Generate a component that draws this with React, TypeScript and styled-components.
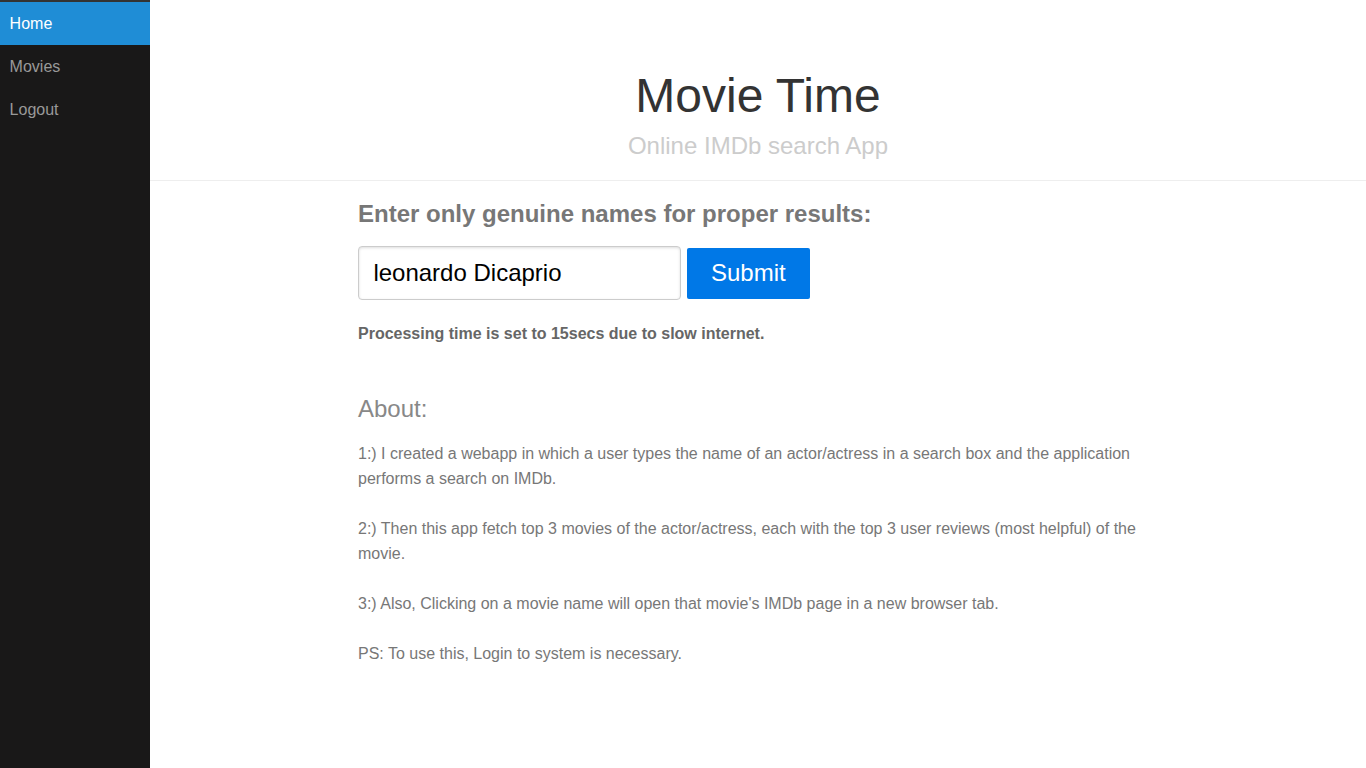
import React from "react";
import styled, { createGlobalStyle } from "styled-components";

const Global = createGlobalStyle`
  html, body { margin: 0; padding: 0; }
  body { font-family: "Liberation Sans", Arial, sans-serif; background: #fff; color: #777; }
  * { box-sizing: border-box; }
`;

const Layout = styled.div`
  display: flex;
  min-height: 100vh;
`;

const Sidebar = styled.nav`
  width: 150px;
  flex: 0 0 150px;
  background: #191818;
  border-top: 2px solid #333;
`;

const MenuList = styled.ul`
  list-style: none;
  margin: 0;
  padding: 0;
`;

const MenuLink = styled.a<{ $active?: boolean }>`
  display: block;
  padding: 9.6px 0 9.6px 9.6px;
  font-size: 16px;
  line-height: 24px;
  color: ${(p) => (p.$active ? "#fff" : "#999")};
  background: ${(p) => (p.$active ? "#1f8dd6" : "transparent")};
  text-decoration: none;
`;

const Main = styled.main`
  flex: 1;
  min-width: 0;
`;

const Header = styled.header`
  text-align: center;
  padding: 68px 32px 20px;
  border-bottom: 1px solid #eee;
`;

const Title = styled.h1`
  margin: 0;
  font-size: 48px;
  line-height: 56px;
  font-weight: 300;
  color: #333;
`;

const Subtitle = styled.h2`
  margin: 8px 0 0;
  font-size: 24px;
  line-height: 28px;
  font-weight: 300;
  color: #ccc;
`;

const Content = styled.section`
  max-width: 864px;
  margin: 0 auto;
  padding: 0 32px 50px;
`;

const Prompt = styled.h3`
  margin: 19px 0 0;
  font-size: 24px;
  line-height: 28px;
  font-weight: 700;
  color: #777;
`;

const Form = styled.form`
  display: flex;
  align-items: center;
  gap: 6px;
  margin-top: 18px;
`;

const Input = styled.input`
  width: 323px;
  height: 54px;
  padding: 12px 14.4px;
  font-family: "Liberation Sans", Arial, sans-serif;
  font-size: 24px;
  color: #000;
  border: 1px solid #ccc;
  border-radius: 4px;
  box-shadow: inset 0 1px 3px #ddd;
  outline: none;
`;

const Button = styled.button`
  height: 51px;
  padding: 0 24px;
  font-family: "Liberation Sans", Arial, sans-serif;
  font-size: 24px;
  color: #fff;
  background: #0078e7;
  border: none;
  border-radius: 2px;
  cursor: pointer;
`;

const Note = styled.p`
  margin: 24px 0 0;
  font-size: 16px;
  line-height: 20px;
  font-weight: 700;
  color: #666;
`;

const Subhead = styled.h4`
  margin: 51px 0 0;
  font-size: 24px;
  line-height: 28px;
  font-weight: 300;
  color: #888;
`;

const Para = styled.p`
  margin: 18px 0 0;
  font-size: 16px;
  line-height: 25px;
  color: #777;
`;

export default function App() {
  return (
    <>
      <Global />
      <Layout>
        <Sidebar>
          <MenuList>
            <li><MenuLink href="#" $active>Home</MenuLink></li>
            <li><MenuLink href="#">Movies</MenuLink></li>
            <li><MenuLink href="#">Logout</MenuLink></li>
          </MenuList>
        </Sidebar>
        <Main>
          <Header>
            <Title>Movie Time</Title>
            <Subtitle>Online IMDb search App</Subtitle>
          </Header>
          <Content>
            <Prompt>Enter only genuine names for proper results:</Prompt>
            <Form onSubmit={(e) => e.preventDefault()}>
              <Input type="text" defaultValue="leonardo Dicaprio" />
              <Button type="submit">Submit</Button>
            </Form>
            <Note>Processing time is set to 15secs due to slow internet.</Note>
            <Subhead>About:</Subhead>
            <Para>
              1:) I created a webapp in which a user types the name of an actor/actress in a search box and the application performs a search on IMDb.
              <br />
              <br />
              2:) Then this app fetch top 3 movies of the actor/actress, each with the top 3 user reviews (most helpful) of the movie.
              <br />
              <br />
              3:) Also, Clicking on a movie name will open that movie's IMDb page in a new browser tab.
              <br />
              <br />
              PS: To use this, Login to system is necessary.
            </Para>
          </Content>
        </Main>
      </Layout>
    </>
  );
}
